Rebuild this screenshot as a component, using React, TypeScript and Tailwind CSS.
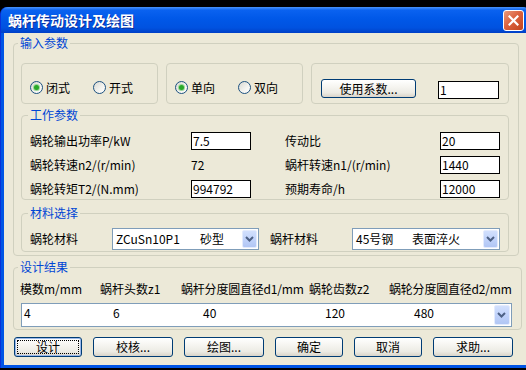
import type { ReactNode } from 'react';

const Radio = ({ checked, label }: { checked?: boolean; label: string }) => (
  <div className="w-[63px] h-[17px] flex items-center gap-[3px]">
    <span className="w-[13px] h-[13px] shrink-0 rounded-full border border-[#1c5180] bg-[linear-gradient(135deg,#d8d8d2_0%,#f4f4f0_60%,#ffffff_100%)] flex items-center justify-center">
      {checked && <span className="w-[5px] h-[5px] rounded-full bg-[#29a829] shadow-[0_0_0_1px_#9ad89a]" />}
    </span>
    <span className="leading-[17px]">{label}</span>
  </div>
);

const XpButton = ({ children, className, isDefault }: { children: ReactNode; className: string; isDefault?: boolean }) => (
  <button
    className={`p-[2px] rounded-[3px] border border-[#003c74] bg-[linear-gradient(180deg,#ffffff_0%,#f7f6f2_35%,#ecebe4_75%,#d9d4c9_100%)] ${className} ${
      isDefault ? 'shadow-[inset_0_0_0_1px_#9bb8ea]' : ''
    }`}
  >
    <span
      className={`h-full w-full flex items-center justify-center border border-dotted whitespace-nowrap ${
        isDefault ? 'border-black' : 'border-transparent'
      }`}
    >
      {children}
    </span>
  </button>
);

const Field = ({ value }: { value: string }) => (
  <div className="w-[60px] h-[18px] border border-black bg-white pl-[1px] leading-[16px]">{value}</div>
);

const DropButton = ({ className }: { className: string }) => (
  <div
    className={`rounded-[2px] border border-[#e3ebfd] bg-[linear-gradient(180deg,#d2e0fd_0%,#c1d3fb_50%,#b1c6f4_100%)] flex items-center justify-center ${className}`}
  >
    <svg width="9" height="6" viewBox="0 0 9 6">
      <path d="M1 1l3.5 3.5L8 1" stroke="#4d6185" strokeWidth="2" fill="none" />
    </svg>
  </div>
);

const Combo = ({ className, first, firstW, second }: { className: string; first: string; firstW: string; second: string }) => (
  <div className={`h-[22px] border border-[#7f9db9] bg-white flex items-center ${className}`}>
    <div className="flex-1 flex pl-[3px] leading-[14px] whitespace-nowrap">
      <span className={firstW}>{first}</span>
      <span>{second}</span>
    </div>
    <DropButton className="w-[15px] h-[18px] mr-[1px]" />
  </div>
);

const Group = ({ title, legendClass, className, children }: { title: string; legendClass: string; className: string; children: ReactNode }) => (
  <fieldset className={`border border-[#d0d0bf] rounded-[4px] p-0 ${className}`}>
    <legend className={`px-[2px] leading-[14px] text-[#0046d5] ${legendClass}`}>{title}</legend>
    {children}
  </fieldset>
);

export default function App() {
  return (
    <div className="w-[526px] h-[370px] bg-black overflow-hidden pt-[7px] text-[12px] text-black font-['Noto_Sans_CJK_SC',sans-serif]">
      <div className="w-[530px] h-[361px] rounded-t-[7px] bg-[#0055e5] border-l border-[#0831d9] flex flex-col">
        {/* title bar */}
        <div className="h-[26px] shrink-0 rounded-t-[7px] bg-[linear-gradient(180deg,#4a94fa_0%,#0a62f0_12%,#0058e8_45%,#0052e0_80%,#003fc6_100%)] flex items-start justify-between pl-[7px] pr-[6px]">
          <span className="mt-[5px] text-[14px] leading-[16px] font-bold text-white [text-shadow:1px_1px_0_#0a2d9c]">
            蜗杆传动设计及绘图
          </span>
          <div className="mt-[3px] w-[21px] h-[21px] rounded-[3px] border border-white bg-[linear-gradient(135deg,#ea9a7c_0%,#dc6340_45%,#c2431c_100%)] flex items-center justify-center">
            <svg width="11" height="11" viewBox="0 0 11 11">
              <path d="M1.5 1.5l8 8M9.5 1.5l-8 8" stroke="white" strokeWidth="2.2" strokeLinecap="square" />
            </svg>
          </div>
        </div>

        {/* body */}
        <div className="ml-[3px] h-[332px] shrink-0 bg-[#ece9d8] pt-[3px] pl-[9px]">
          <Group title="输入参数" legendClass="ml-[4px]" className="w-[506px]">
            <div className="pt-[13px] pl-[7px] pr-[9px] pb-[3px]">
              <div className="flex gap-[8px]">
                <div className="w-[137px] h-[41px] border border-[#d0d0bf] rounded-[4px] pt-[15px] pl-[8px] flex">
                  <Radio checked label="闭式" />
                  <Radio label="开式" />
                </div>
                <div className="w-[137px] h-[41px] border border-[#d0d0bf] rounded-[4px] pt-[15px] pl-[8px] flex">
                  <Radio checked label="单向" />
                  <Radio label="双向" />
                </div>
                <div className="w-[198px] h-[41px] border border-[#d0d0bf] rounded-[4px] pt-[15px] pl-[9px] flex items-start">
                  <XpButton className="w-[95px] h-[19px]">使用系数...</XpButton>
                  <div className="ml-[22px] mt-[2px] w-[61px] h-[18px] border border-black bg-white pl-[1px] leading-[16px]">1</div>
                </div>
              </div>

              <Group title="工作参数" legendClass="ml-[6px]" className="mt-[4px] w-[488px]">
                <div className="pt-[10px] pb-[1px] pl-[8px] grid grid-cols-[161px_60px_34px_155px_60px] gap-y-[6px] leading-[18px] whitespace-nowrap">
                  <span>蜗轮输出功率P/kW</span>
                  <Field value="7.5" />
                  <span />
                  <span>传动比</span>
                  <Field value="20" />

                  <span>蜗轮转速n2/(r/min)</span>
                  <span>72</span>
                  <span />
                  <span>蜗杆转速n1/(r/min)</span>
                  <Field value="1440" />

                  <span>蜗轮转矩T2/(N.mm)</span>
                  <Field value="994792" />
                  <span />
                  <span>预期寿命/h</span>
                  <Field value="12000" />
                </div>
              </Group>

              <Group title="材料选择" legendClass="ml-[6px]" className="mt-[6px] w-[488px]">
                <div className="pt-[8px] pb-[1px] pl-[8px] flex items-center">
                  <span className="w-[82px]">蜗轮材料</span>
                  <Combo className="w-[147px]" first="ZCuSn10P1" firstW="w-[84px]" second="砂型" />
                  <span className="ml-[11px] w-[82px]">蜗杆材料</span>
                  <Combo className="w-[148px]" first="45号钢" firstW="w-[56px]" second="表面淬火" />
                </div>
              </Group>
            </div>
          </Group>

          <Group title="设计结果" legendClass="ml-[4px]" className="mt-[4px] w-[506px]">
            <div className="pt-[8px] pl-[7px] pr-[9px] pb-[2px]">
              <div className="flex leading-[14px] -ml-[1px] whitespace-nowrap">
                <span className="w-[80px] shrink-0">模数m/mm</span>
                <span className="w-[81px] shrink-0">蜗杆头数z1</span>
                <span className="w-[128px] shrink-0 tracking-[-0.2px]">蜗杆分度圆直径d1/mm</span>
                <span className="w-[80px] shrink-0">蜗轮齿数z2</span>
                <span className="tracking-[-0.2px]">蜗轮分度圆直径d2/mm</span>
              </div>
              <div className="mt-[7px] h-[24px] border border-[#7f9db9] bg-white flex items-start">
                <div className="flex-1 flex pl-[2px] pt-[2px] leading-[14px]">
                  <span className="w-[89px]">4</span>
                  <span className="w-[90px]">6</span>
                  <span className="w-[122px]">40</span>
                  <span className="w-[89px]">120</span>
                  <span>480</span>
                </div>
                <DropButton className="w-[16px] h-[20px] mt-[1px] mr-[1px]" />
              </div>
            </div>
          </Group>

          <div className="mt-[7px] ml-[1px] flex gap-[11px]">
            <XpButton isDefault className="w-[68px] h-[20px]">设计</XpButton>
            <XpButton className="w-[80px] h-[20px]">校核...</XpButton>
            <XpButton className="w-[80px] h-[20px]">绘图...</XpButton>
            <XpButton className="w-[68px] h-[20px]">确定</XpButton>
            <XpButton className="w-[68px] h-[20px]">取消</XpButton>
            <XpButton className="w-[80px] h-[20px]">求助...</XpButton>
          </div>
        </div>
      </div>
    </div>
  );
}
